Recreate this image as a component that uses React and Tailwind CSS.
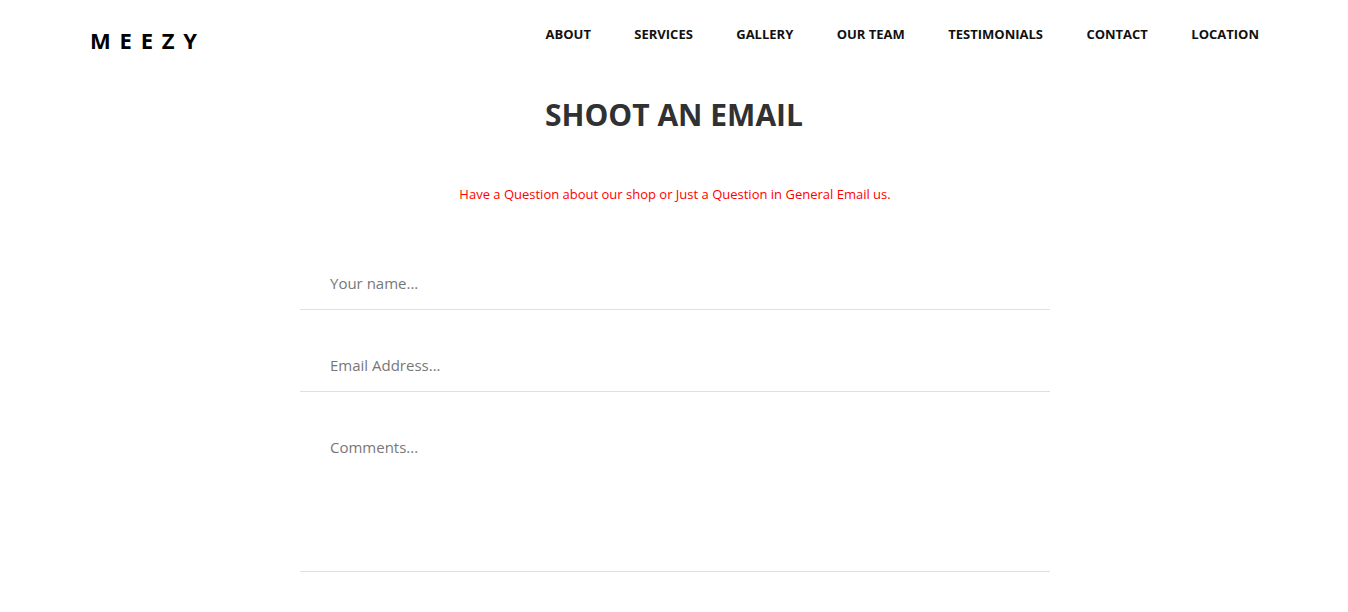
export default function App() {
  const links = ['ABOUT', 'SERVICES', 'GALLERY', 'OUR TEAM', 'TESTIMONIALS', 'CONTACT', 'LOCATION'];

  return (
    <div className="min-h-screen bg-white font-['Open_Sans',sans-serif]">
      <header className="flex items-center justify-between pl-[90px] pr-[89px] h-[70px] pb-[2px]">
        <a href="#" className="text-[22px] font-bold tracking-[0.4em] text-black leading-none mt-[12px]">
          MEEZY
        </a>
        <nav className="flex items-center gap-[43.4px]">
          {links.map((l) => (
            <a key={l} href="#" className="text-[13px] font-bold text-[#111] leading-none">
              {l}
            </a>
          ))}
        </nav>
      </header>

      <section className="flex flex-col items-center">
        <h1 className="text-[30px] font-bold text-[#2f3133] leading-none mt-[30px]">SHOOT AN EMAIL</h1>
        <p className="text-[13px] text-[#ff0000] mt-[58px] ml-[2px] leading-none">
          Have a Question about our shop or Just a Question in General Email us.
        </p>

        <form className="w-[750px] mt-[57px] ml-[2px] flex flex-col">
          <input
            type="text"
            placeholder="Your name..."
            className="h-[52px] px-[30px] pb-[2px] text-[15px] text-[#555] placeholder:text-[#777] border-b border-[#e0e0e0] outline-none"
          />
          <input
            type="email"
            placeholder="Email Address..."
            className="h-[52px] mt-[30px] px-[30px] pb-[2px] text-[15px] text-[#555] placeholder:text-[#777] border-b border-[#e0e0e0] outline-none"
          />
          <textarea
            placeholder="Comments..."
            className="h-[150px] mt-[30px] px-[30px] pt-[15px] text-[15px] leading-[21px] text-[#555] placeholder:text-[#777] border-b border-[#e0e0e0] outline-none resize-none"
          />
        </form>
      </section>
    </div>
  );
}
